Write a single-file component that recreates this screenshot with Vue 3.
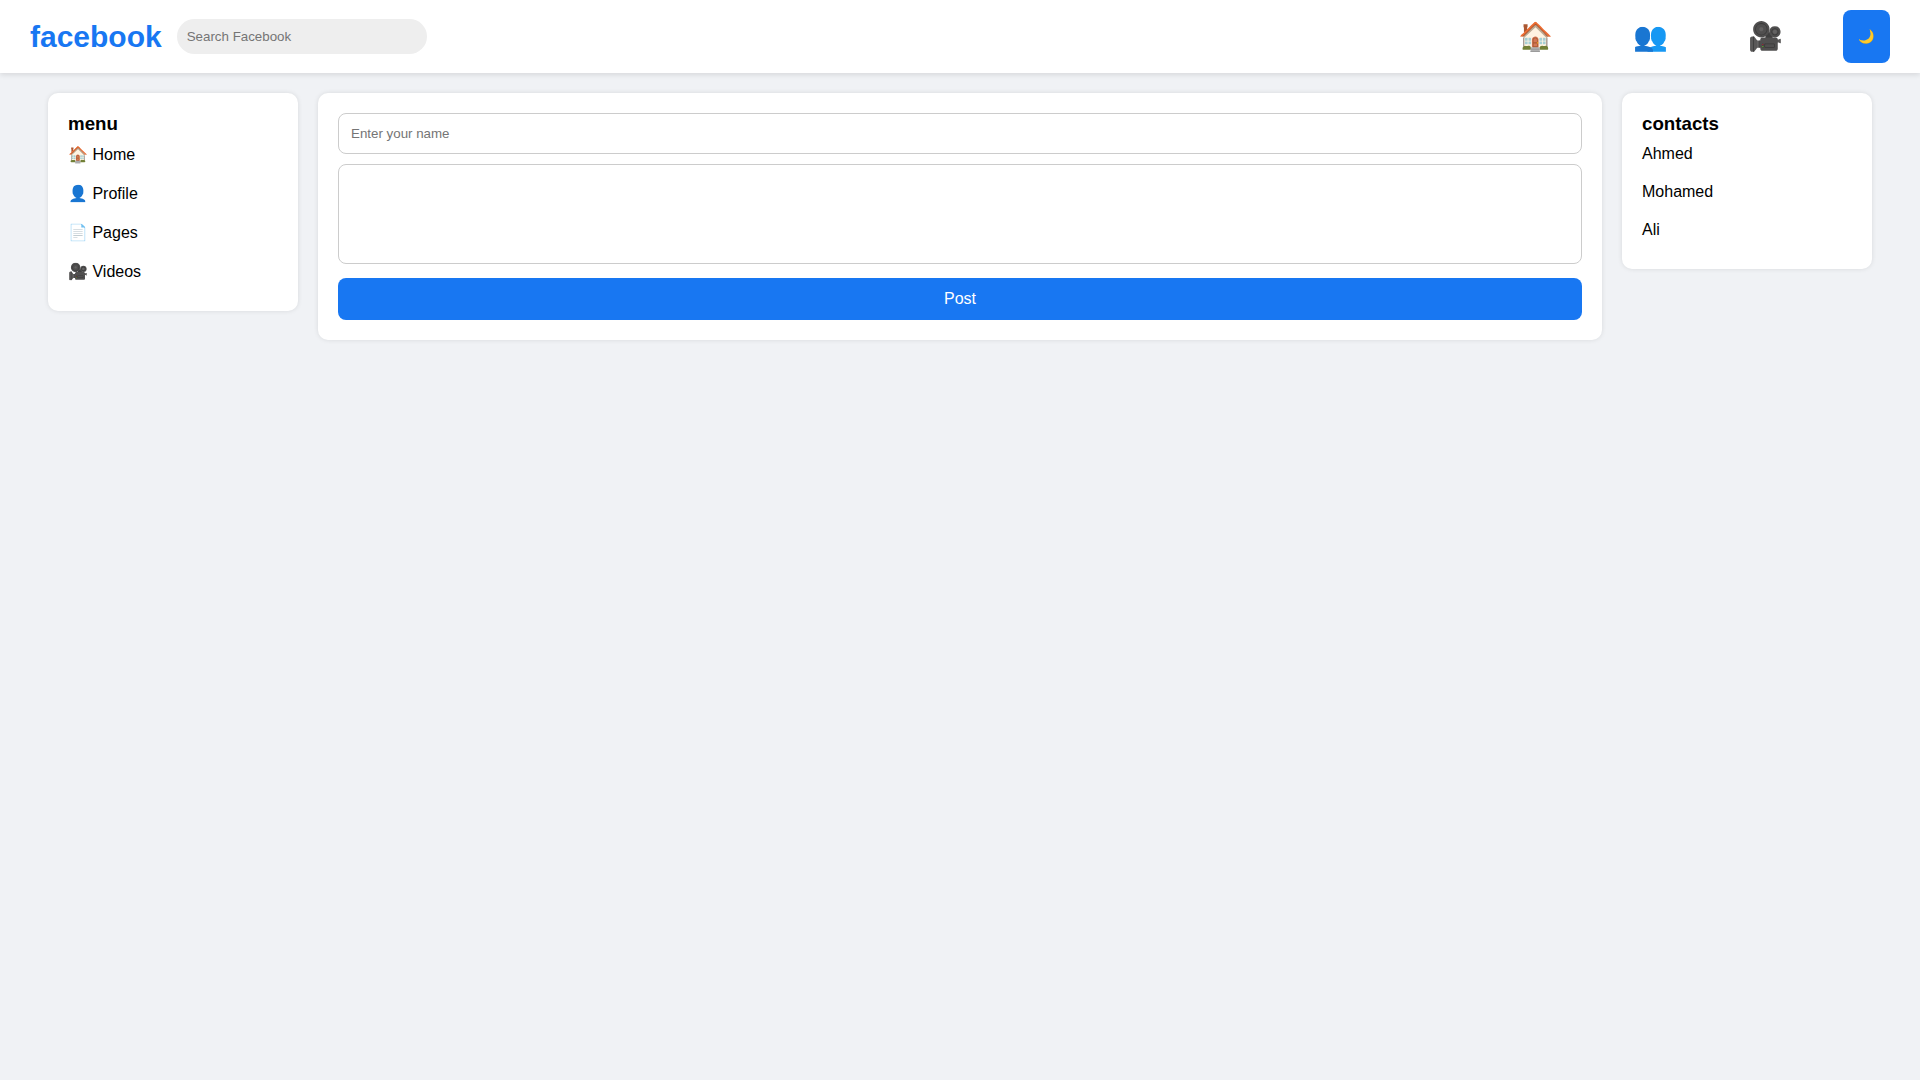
<script setup>
import { ref } from 'vue'

const search = ref('')
const name = ref('')
const content = ref('')
const posts = ref([])
const dark = ref(false)

const navLinks = [
  { icon: '🏠', label: 'Home' },
  { icon: '👥', label: 'Friends' },
  { icon: '🎥', label: 'Videos' },
]

const menu = [
  { icon: '🏠', label: 'Home' },
  { icon: '👤', label: 'Profile' },
  { icon: '📄', label: 'Pages' },
  { icon: '🎥', label: 'Videos' },
]

const contacts = ['Ahmed', 'Mohamed', 'Ali']

function addPost() {
  if (!name.value || !content.value) return
  posts.value.unshift({ name: name.value, content: content.value })
  content.value = ''
}
</script>

<template>
  <div class="page" :class="{ dark }">
    <header class="navbar">
      <div class="left">
        <h1 class="logo">facebook</h1>
        <input
          v-model="search"
          class="search"
          type="text"
          placeholder="Search Facebook"
          aria-label="Search Facebook"
        />
      </div>

      <div class="right">
        <nav class="icons">
          <a v-for="link in navLinks" :key="link.label" href="#" :aria-label="link.label">{{ link.icon }}</a>
        </nav>
        <button class="theme-btn" type="button" aria-label="Dark mode" @click="dark = !dark">🌙</button>
      </div>
    </header>

    <div class="container">
      <aside class="card">
        <h3>menu</h3>
        <ul>
          <li v-for="item in menu" :key="item.label">
            <a href="#">{{ item.icon }} {{ item.label }}</a>
          </li>
        </ul>
      </aside>

      <main>
        <form class="card post-form" @submit.prevent="addPost">
          <input v-model="name" type="text" placeholder="Enter your name" aria-label="Enter your name" />
          <textarea v-model="content" aria-label="Post content"></textarea>
          <button class="post-btn" type="submit">Post</button>
        </form>

        <article v-for="(post, i) in posts" :key="i" class="card post">
          <h3>{{ post.name }}</h3>
          <p>{{ post.content }}</p>
        </article>
      </main>

      <aside class="card">
        <h3>contacts</h3>
        <ul>
          <li v-for="contact in contacts" :key="contact">{{ contact }}</li>
        </ul>
      </aside>
    </div>
  </div>
</template>

<style>
body {
  margin: 0;
  background-color: #f0f2f5;
}
</style>

<style scoped>
* {
  box-sizing: border-box;
  margin: 0;
  padding: 0;
  font-family: Arial, 'Liberation Sans', sans-serif;
}

.page {
  min-height: 100vh;
  background-color: #f0f2f5;
  color: black;
}

a {
  color: inherit;
  text-decoration: none;
}

/* Navbar */
.navbar {
  display: flex;
  justify-content: space-between;
  padding: 10px 30px;
  background-color: white;
  box-shadow: 0 2px 5px rgba(0, 0, 0, 0.1);
}

.left {
  display: flex;
  align-items: center;
  gap: 15px;
}

.logo {
  font-size: 30px;
  color: #1877f2;
}

.search {
  width: 250px;
  padding: 10px;
  border: none;
  border-radius: 20px;
  background-color: #eee;
  outline: none;
}

.right {
  display: flex;
  gap: 60px;
}

.icons {
  display: flex;
  align-items: center;
  gap: 80px;
  font-size: 28px;
}

.theme-btn {
  min-height: 53px;
  padding: 12px 15px;
  border: none;
  border-radius: 8px;
  background-color: #1877f2;
  color: white;
  cursor: pointer;
}

/* Layout */
.container {
  display: grid;
  grid-template-columns: 250px 1fr 250px;
  align-items: start;
  gap: 20px;
  width: 95%;
  margin: 20px auto;
}

.card {
  padding: 20px;
  border-radius: 10px;
  background-color: white;
  box-shadow: 0 0 5px rgba(0, 0, 0, 0.1);
}

h3 {
  line-height: 22px;
}

ul {
  list-style: none;
}

li {
  padding: 10px 0;
}

/* Post form */
.post-form input,
.post-form textarea {
  display: block;
  width: 100%;
  padding: 12px;
  border: 1px solid #ccc;
  border-radius: 8px;
  outline: none;
}

.post-form input {
  margin-bottom: 10px;
}

.post-form textarea {
  height: 100px;
  margin-bottom: 14px;
  resize: none;
}

.post-btn {
  width: 100%;
  padding: 12px;
  border: none;
  border-radius: 8px;
  background-color: #1877f2;
  color: white;
  font-size: 16px;
  cursor: pointer;
}

.post {
  margin-top: 20px;
}

/* Dark mode */
.dark,
.dark .search {
  background-color: #18191a;
  color: white;
}

.dark .navbar,
.dark .card {
  background-color: #242526;
}

@media (max-width: 900px) {
  .container {
    grid-template-columns: 1fr;
  }

  .icons {
    gap: 20px;
  }

  .right {
    gap: 20px;
  }
}
</style>
